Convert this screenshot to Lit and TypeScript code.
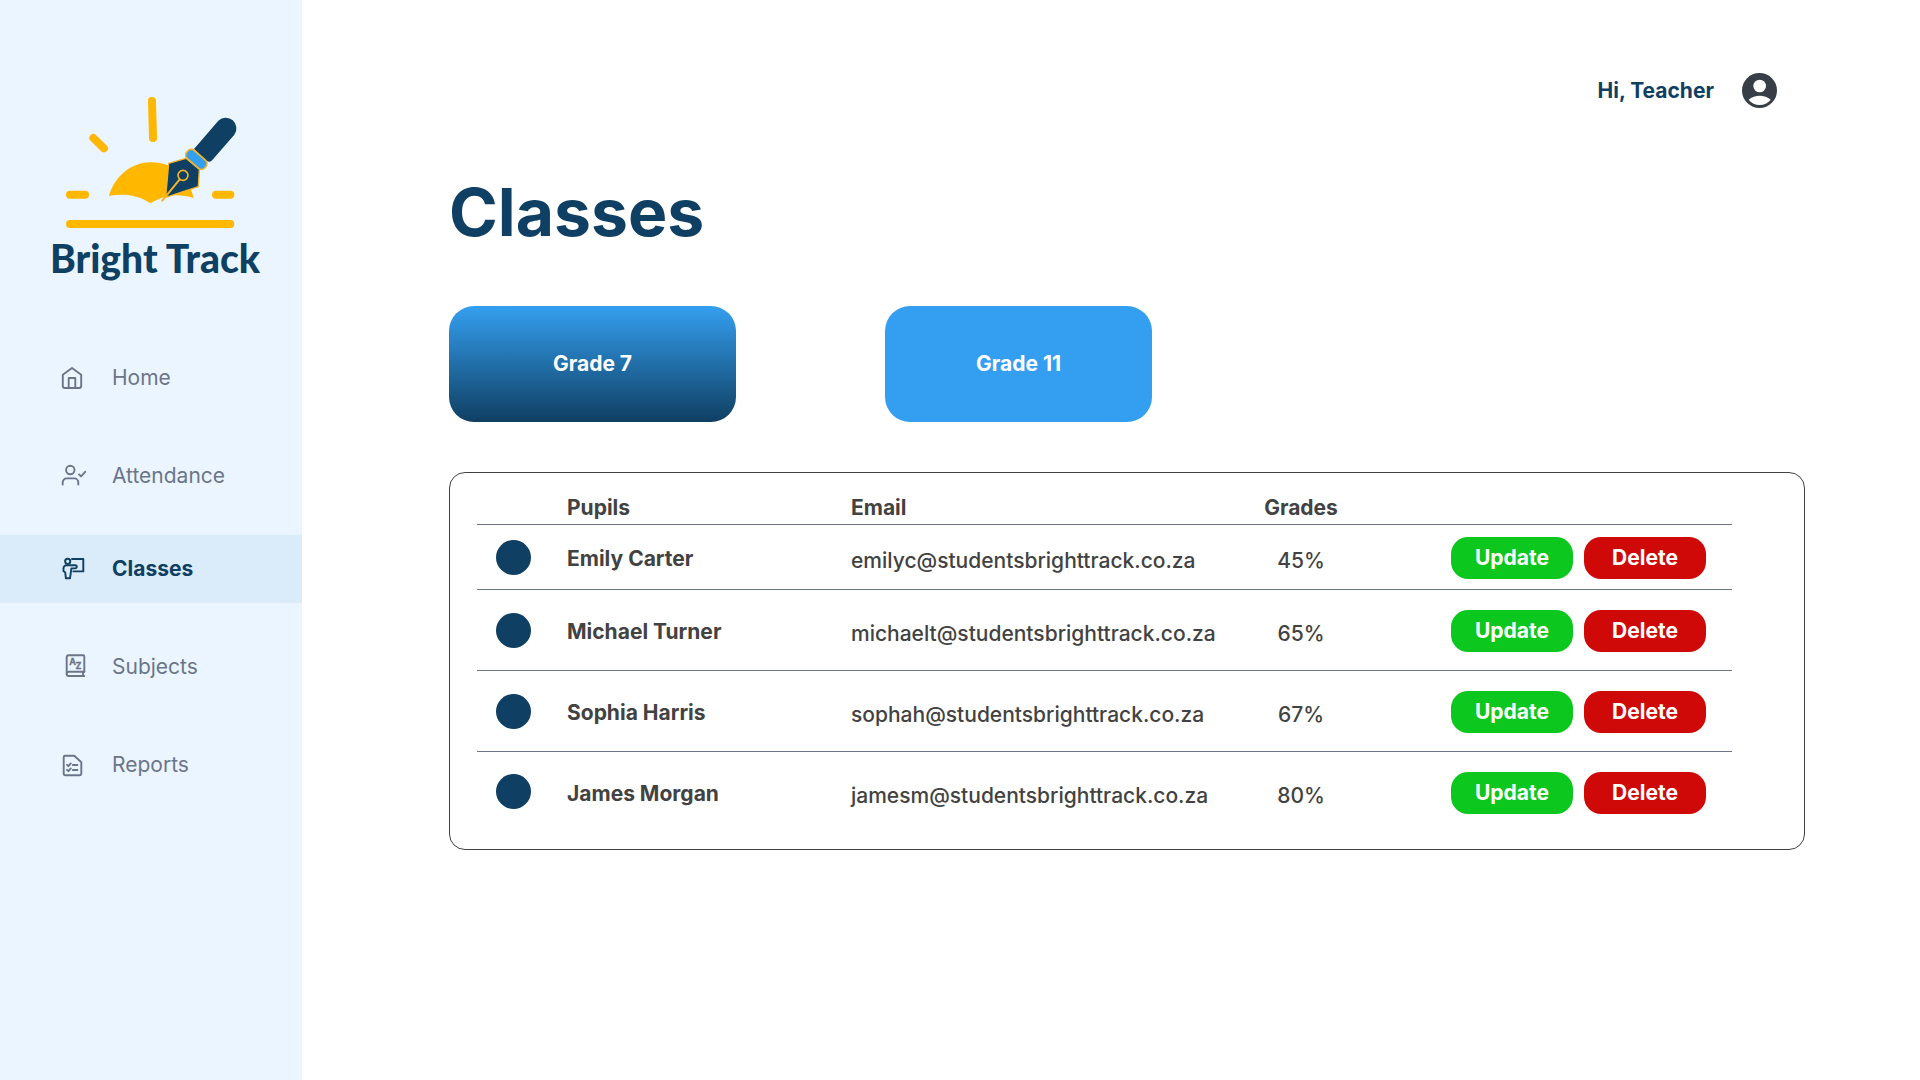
import { LitElement, html, svg, css } from "lit";
import { customElement, state } from "lit/decorators.js";
import { classMap } from "lit/directives/class-map.js";

interface NavItem {
  label: string;
  icon: unknown;
}

interface Pupil {
  name: string;
  email: string;
  grade: string;
}

const NAV: NavItem[] = [
  {
    label: "Home",
    icon: svg`<path d="M2.8 10.8 12 4l9.2 6.8V22a2 2 0 0 1-2 2H4.8a2 2 0 0 1-2-2Z"/><path d="M8.7 24V14h6.6v10"/>`,
  },
  {
    label: "Attendance",
    icon: svg`<circle cx="10.3" cy="8" r="4.2"/><path d="M2.7 22.6v-2.2a4 4 0 0 1 4-4h7.6a4 4 0 0 1 4 4v2.2"/><path d="m19 12.4 2 2 4.2-4.6"/>`,
  },
  {
    label: "Classes",
    icon: svg`<circle cx="7.7" cy="6.3" r="2.6"/><path d="M12 4h11.3v12.4h-10"/><path d="M6.6 10.2h8.6a1.5 1.5 0 0 1 0 3.2h-3.8L10 23.3H5.9l-.7-6-1.7-1v-3a3 3 0 0 1 3.1-3.1Z"/>`,
  },
  {
    label: "Subjects",
    icon: svg`<path d="M24.3 18.7V3.3a1 1 0 0 0-1-1H8.7a2 2 0 0 0-2 2V21a2 2 0 0 0 2 2h15.6"/><path d="M6.7 20.7a2 2 0 0 1 2-2h15.6M23 18.7V23"/><text class="glyph" x="9.2" y="12">A</text><text class="glyph" x="15.6" y="16">Z</text>`,
  },
  {
    label: "Reports",
    icon: svg`<path d="M5.2 4.7h9.1l7 6.6v11.5a1.5 1.5 0 0 1-1.5 1.5H5.2a1.5 1.5 0 0 1-1.5-1.5V6.2a1.5 1.5 0 0 1 1.5-1.5Z"/><path d="m7 13.8 1.4 1.4 2.4-2.8M12.8 14h4.6M7 18.8l1.4 1.4 2.4-2.8M12.8 19h4.6"/>`,
  },
];

const PUPILS: Pupil[] = [
  { name: "Emily Carter", email: "emilyc@studentsbrighttrack.co.za", grade: "45%" },
  { name: "Michael Turner", email: "michaelt@studentsbrighttrack.co.za", grade: "65%" },
  { name: "Sophia Harris", email: "sophah@studentsbrighttrack.co.za", grade: "67%" },
  { name: "James Morgan", email: "jamesm@studentsbrighttrack.co.za", grade: "80%" },
];

@customElement("bt-sidebar")
class BtSidebar extends LitElement {
  @state() private active = "Classes";

  static styles = css`
    :host {
      display: block;
      background: #ebf5ff;
      font-family: Inter, "Liberation Sans", sans-serif;
    }
    .brand {
      display: flex;
      flex-direction: column;
      align-items: center;
      padding: 92px 0 0 8px;
    }
    .mark {
      width: 190px;
      height: 140px;
    }
    .wordmark {
      font: 900 39px/44px Lato, "Liberation Sans", sans-serif;
      color: #0f3f62;
      margin-top: 4px;
      white-space: nowrap;
    }
    nav {
      display: flex;
      flex-direction: column;
      gap: 30px;
      padding-top: 64px;
    }
    .item {
      display: flex;
      align-items: center;
      gap: 24px;
      height: 68px;
      padding-left: 60px;
      color: #6b7589;
      font-size: 21px;
      line-height: 28px;
      text-decoration: none;
    }
    .item.active {
      margin-top: -5px;
      background: #daebf9;
      color: #0f3f62;
      font-weight: 700;
    }
    .icon {
      width: 28px;
      height: 28px;
      fill: none;
      stroke: currentColor;
      stroke-width: 1.9;
      stroke-linecap: round;
      stroke-linejoin: round;
    }
    .glyph {
      font: 700 9px Inter, sans-serif;
      fill: currentColor;
      stroke-width: 0.3;
    }
  `;

  render() {
    return html`
      <div class="brand">
        <svg class="mark" viewBox="90 36 570 420" aria-hidden="true">
          <g stroke="#ffb700" stroke-width="24" stroke-linecap="round">
            <path d="M366 63 369 174M190 174l32 31M120 344h45M558 344h43M120 432h481" />
          </g>
          <path fill="#ffb700" d="M237 347C255 287 305 247 362 247C425 247 475 285 491 354C445 340 405 344 362 370C320 342 280 341 237 347Z" />
          <path fill="#0f3f62" d="M492 207 565 122A32 32 0 0 1 613 164L547 240Q540 249 530 242Z" />
          <path fill="#0f3f62" stroke="#f0b429" stroke-width="4" stroke-linejoin="round" d="M416 250 468 235 508 268 505 320 407 352Z" />
          <rect x="463" y="222" width="72" height="32" rx="14" fill="#349ff0" stroke="#f0b429" stroke-width="5" transform="rotate(41 499 238)" />
          <path stroke="#f0b429" stroke-width="6" stroke-linecap="round" d="m397 362 52-64" />
          <circle cx="459" cy="286" r="15" fill="#0f3f62" stroke="#f0b429" stroke-width="5" />
        </svg>
        <span class="wordmark">Bright Track</span>
      </div>
      <nav aria-label="Main">
        ${NAV.map(
          (item) => html`<a
            href="#"
            class=${classMap({ item: true, active: item.label === this.active })}
            @click=${() => (this.active = item.label)}
          >
            <svg class="icon" viewBox="0 0 28 28" aria-hidden="true">${item.icon}</svg>
            <span>${item.label}</span>
          </a>`
        )}
      </nav>
    `;
  }
}

@customElement("bt-pupil-table")
class BtPupilTable extends LitElement {
  static styles = css`
    :host {
      display: block;
      box-sizing: border-box;
      border: 1px solid #424242;
      border-radius: 16px;
      padding: 0 72px 18px 27px;
      font-family: Inter, "Liberation Sans", sans-serif;
      color: #424242;
    }
    table {
      width: 100%;
      border-collapse: separate;
      border-spacing: 0;
      table-layout: fixed;
      font-size: 21px;
      line-height: 28px;
    }
    .c-avatar { width: 90px; }
    .c-name { width: 284px; }
    .c-email { width: 380px; }
    .c-grade { width: 140px; }
    th,
    td {
      padding: 0;
      text-align: left;
      vertical-align: middle;
      white-space: nowrap;
    }
    thead th {
      height: 33px;
      padding-top: 18px;
      border-bottom: 1px solid #6b7589;
    }
    tbody td,
    tbody th {
      box-sizing: border-box;
      height: 81px;
      border-bottom: 1px solid #6b7589;
    }
    tbody tr:first-child > * {
      height: 65px;
    }
    tbody tr:last-child > * {
      height: 79px;
      border-bottom: 0;
    }
    tbody .name { padding-top: 4px; }
    tbody .text {
      padding-top: 8px;
      font-weight: 500;
    }
    thead .grade,
    tbody .grade {
      text-align: center;
    }
    .avatar {
      width: 35px;
      height: 35px;
      margin-left: 19px;
      border-radius: 50%;
      background: #0f3f62;
    }
    .actions {
      display: flex;
      justify-content: flex-end;
      gap: 11px;
      padding: 2px 26px 0 0;
    }
    button {
      width: 122px;
      height: 42px;
      border: 0;
      border-radius: 17px;
      padding: 0;
      color: #fff;
      font: 700 21px/28px Inter, "Liberation Sans", sans-serif;
      cursor: pointer;
    }
    .update { background: #0cc71d; }
    .delete { background: #cf0808; }
  `;

  render() {
    return html`
      <table>
        <colgroup>
          <col class="c-avatar" /><col class="c-name" /><col class="c-email" /><col class="c-grade" /><col />
        </colgroup>
        <thead>
          <tr>
            <th></th>
            <th scope="col">Pupils</th>
            <th scope="col">Email</th>
            <th scope="col" class="grade">Grades</th>
            <th></th>
          </tr>
        </thead>
        <tbody>
          ${PUPILS.map(
            (p) => html`<tr>
              <td><div class="avatar"></div></td>
              <th scope="row" class="name">${p.name}</th>
              <td class="text">${p.email}</td>
              <td class="text grade">${p.grade}</td>
              <td>
                <div class="actions">
                  <button type="button" class="update">Update</button>
                  <button type="button" class="delete">Delete</button>
                </div>
              </td>
            </tr>`
          )}
        </tbody>
      </table>
    `;
  }
}

@customElement("app-root")
class AppRoot extends LitElement {
  static styles = css`
    :host {
      display: grid;
      grid-template-columns: 302px minmax(0, 1fr);
      min-height: 100vh;
      background: #fff;
      font-family: Inter, "Liberation Sans", sans-serif;
    }
    main {
      padding: 73px 115px 64px 147px;
    }
    header {
      display: flex;
      justify-content: flex-end;
      align-items: center;
      gap: 28px;
      padding-right: 28px;
      color: #0f3f62;
      font-size: 21px;
      line-height: 28px;
      font-weight: 700;
    }
    .user {
      display: block;
      width: 35px;
      height: 35px;
    }
    h1 {
      margin: 64px 0 0;
      font-size: 66px;
      line-height: 80px;
      font-weight: 700;
      color: #0f3f62;
    }
    .grades {
      display: flex;
      gap: 149px;
      margin: 54px 0 50px;
    }
    .grade {
      width: 267px;
      height: 116px;
      border: 0;
      border-radius: 25px;
      background: #349ff0;
      color: #fff;
      font: 700 21px/28px Inter, "Liberation Sans", sans-serif;
      cursor: pointer;
    }
    .grade.selected {
      width: 287px;
      background: linear-gradient(#349ff0, #0f3f62);
    }
  `;

  render() {
    return html`
      <bt-sidebar></bt-sidebar>
      <main>
        <header>
          <span>Hi, Teacher</span>
          <svg class="user" viewBox="0 0 105 105" aria-hidden="true">
            <circle cx="52.5" cy="52.5" r="52.5" fill="#383e46" />
            <circle cx="53" cy="39" r="19" fill="#fff" />
            <path fill="#fff" d="M20 80C28 72 42 68 53 68S78 72 86 80C78 90 66 96 53 96S28 90 20 80Z" />
          </svg>
        </header>
        <h1>Classes</h1>
        <div class="grades">
          <button type="button" class="grade selected">Grade 7</button>
          <button type="button" class="grade">Grade 11</button>
        </div>
        <bt-pupil-table></bt-pupil-table>
      </main>
    `;
  }
}
